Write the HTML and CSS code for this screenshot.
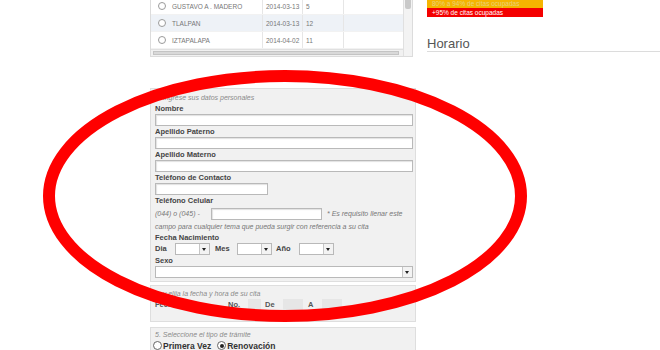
FILE: index.html
```html
<!DOCTYPE html>
<html lang="es">
<head>
<meta charset="utf-8">
<title>Citas</title>
<link rel="stylesheet" href="styles.css">
</head>
<body>
<div class="page">
  <div class="left">
    <div class="table-box">
      <div class="grid">
        <div class="rows">
          <div class="row">
            <div class="c c1"><span class="radio"></span>GUSTAVO A . MADERO</div>
            <div class="c c2">2014-03-13</div>
            <div class="c c3">5</div>
            <div class="c c4"></div>
          </div>
          <div class="row alt">
            <div class="c c1"><span class="radio"></span>TLALPAN</div>
            <div class="c c2">2014-03-13</div>
            <div class="c c3">12</div>
            <div class="c c4"></div>
          </div>
          <div class="row">
            <div class="c c1"><span class="radio"></span>IZTAPALAPA</div>
            <div class="c c2">2014-04-02</div>
            <div class="c c3">11</div>
            <div class="c c4"></div>
          </div>
        </div>
        <div class="hscroll"><div class="hthumb"></div></div>
      </div>
      <div class="vscroll"><div class="vthumb"></div></div>
    </div>

    <div class="panel p1">
      <div class="legend-line">1. Ingrese sus datos personales</div>
      <div class="lbl">Nombre</div>
      <div class="inp full"></div>
      <div class="lbl">Apellido Paterno</div>
      <div class="inp full"></div>
      <div class="lbl">Apellido Materno</div>
      <div class="inp full"></div>
      <div class="lbl">Teléfono de Contacto</div>
      <div class="inp tel"></div>
      <div class="lbl">Teléfono Celular</div>
      <div class="cel-row">
        <span class="hint pre">(044) o (045) -</span>
        <div class="inp cel"></div>
        <span class="hint note">* Es requisito llenar este</span>
      </div>
      <div class="hint line">campo para cualquier tema que pueda surgir con referencia a su cita</div>
      <div class="lbl">Fecha Nacimiento</div>
      <div class="date-row">
        <span class="lbl dl dia">Dia</span>
        <div class="sel small"><span class="arr"></span></div>
        <span class="lbl dl mes">Mes</span>
        <div class="sel small"><span class="arr"></span></div>
        <span class="lbl dl ano">Año</span>
        <div class="sel small"><span class="arr"></span></div>
      </div>
      <div class="lbl">Sexo</div>
      <div class="sel full"><span class="arr"></span></div>
    </div>

    <div class="panel p2">
      <div class="legend-line">4. y elija la fecha y hora de su cita</div>
      <div class="slot-row">
        <span class="lbl sl fecha">Fecha</span>
        <span class="lbl sl no">No.</span>
        <span class="gbox b1"></span>
        <span class="lbl sl de">De</span>
        <span class="gbox b2"></span>
        <span class="lbl sl a">A</span>
        <span class="gbox b3"></span>
      </div>
    </div>

    <div class="panel p3">
      <div class="legend-line">5. Seleccione el tipo de trámite</div>
      <div class="type-row">
        <span class="radio big"></span><span class="opt">Primera Vez</span>
        <span class="radio big on"></span><span class="opt">Renovación</span>
      </div>
    </div>
  </div>

  <div class="right">
    <div class="legend">
      <div class="lg orange">80% a 94% de citas ocupadas</div>
      <div class="lg red">+95% de citas ocupadas</div>
    </div>
    <h2 class="heading">Horario</h2>
  </div>
</div>

<svg class="annot" width="660" height="350" viewBox="0 0 660 350">
  <ellipse cx="285" cy="196" rx="236" ry="120" fill="none" stroke="#f00" stroke-width="12"/>
</svg>
</body>
</html>
```

FILE: styles.css
```css
* { box-sizing: border-box; }
html, body { margin: 0; padding: 0; }
body {
  width: 660px;
  height: 350px;
  overflow: hidden;
  background: #fff;
  font-family: "Liberation Sans", Arial, sans-serif;
  color: #333;
  position: relative;
}
.page {
  display: flex;
  padding-left: 150px;
}
.left { width: 266px; flex: none; }
.right { flex: 1; margin-left: 11px; }

/* table */
.table-box {
  width: 263px;
  height: 57px;
  display: flex;
  border: 1px solid #dcdcdc;
  border-top: none;
  overflow: hidden;
  background: #fff;
}
.grid { flex: 1; display: flex; flex-direction: column; overflow: hidden; }
.rows { flex: 1; margin-top: -2px; }
.row { display: flex; height: 17px; align-items: center; border-bottom: 1px solid #f2f2f2; }
.row.alt { background: #eef2f7; }
.c {
  height: 100%;
  display: flex;
  align-items: center;
  font-size: 6.5px;
  color: #777;
  border-right: 1px solid #e6e6e6;
  padding-left: 3px;
}
.c1 { width: 112px; padding-left: 7px; }
.c2 { width: 40px; }
.c3 { width: 41px; }
.c4 { flex: 1; border-right: none; }
.radio {
  width: 8px; height: 8px;
  border: 1px solid #9a9a9a;
  border-radius: 50%;
  background: #fff;
  margin-right: 6px;
  flex: none;
  display: inline-block;
}
.hscroll {
  height: 8px;
  background: #f1f1f1;
  border-top: 1px solid #e0e0e0;
  padding: 1px 2px 1px 2px;
}
.hthumb {
  height: 100%;
  width: 246px;
  background: #d9d9d9;
  border: 1px solid #c4c4c4;
}
.vscroll {
  width: 9px;
  background: #f3f3f3;
  border-left: 1px solid #e0e0e0;
  padding: 0 1px;
}
.vthumb { height: 9px; background: #c9c9c9; border-radius: 0 0 2px 2px; }

/* panels */
.panel {
  background: #f1f1f1;
  border: 1px solid #dedede;
  padding: 3px 2px 3px 4px;
}
.p1 { margin-top: 31px; }
.p2 { margin-top: 3px; padding-bottom: 10px; }
.p3 { margin-top: 5px; padding-top: 2px; }
.legend-line {
  font-size: 7px;
  font-style: italic;
  color: #8a8a8a;
  height: 11px;
  line-height: 11px;
}
.p2 .legend-line, .p3 .legend-line { height: 10px; line-height: 10px; }
.lbl {
  font-size: 7.5px;
  font-weight: bold;
  color: #444;
  height: 11px;
  line-height: 12px;
}
.inp {
  height: 12px;
  background: #fff;
  border: 1px solid #b9b9b9;
  box-shadow: inset 1px 1px 1px #e2e2e2;
}
.inp.full { width: 258px; }
.inp.tel { width: 113px; }
.cel-row { display: flex; align-items: center; height: 15px; }
.hint { font-size: 7px; font-style: italic; color: #777; }
.pre { width: 56px; }
.inp.cel { width: 111px; }
.note { margin-left: 5px; }
.hint.line { height: 11px; line-height: 11px; }
.date-row { display: flex; align-items: center; height: 12px; }
.dl { height: 12px; line-height: 12px; }
.dia { width: 20px; }
.mes { width: 22px; margin-left: 5px; }
.ano { width: 23px; margin-left: 4px; }
.sel {
  height: 12px;
  background: #fff;
  border: 1px solid #b9b9b9;
  display: flex;
  justify-content: flex-end;
}
.sel.small { width: 35px; }
.sel.full { width: 258px; }
.arr {
  width: 10px;
  height: 100%;
  border-left: 1px solid #c6c6c6;
  background: #f3f3f3;
  position: relative;
}
.arr::after {
  content: "";
  position: absolute;
  left: 2px; top: 4px;
  border-left: 2.5px solid transparent;
  border-right: 2.5px solid transparent;
  border-top: 3px solid #222;
}
.slot-row { display: flex; align-items: center; height: 12px; }
.sl { height: 12px; line-height: 12px; color: #555; }
.fecha { width: 73px; }
.no { width: 20px; }
.gbox { height: 12px; background: #e6e6e6; display: block; }
.b1 { width: 13px; }
.de { width: 18px; margin-left: 4px; }
.b2 { width: 20px; }
.a { width: 14px; margin-left: 5px; }
.b3 { width: 20px; }
.type-row { display: flex; align-items: center; height: 11px; margin-left: -2px; }
.radio.big { width: 9px; height: 9px; border-color: #666; margin-right: 1px; position: relative; }
.radio.big.on { margin-left: 6px; }
.radio.big.on::after {
  content: "";
  position: absolute;
  left: 1.5px; top: 1.5px;
  width: 4px; height: 4px;
  border-radius: 50%;
  background: #222;
}
.opt { font-size: 8.5px; font-weight: bold; color: #333; line-height: 10px; }

/* right */
.legend { width: 116px; margin-top: -1px; }
.lg {
  font-size: 6.5px;
  padding-left: 5px;
  height: 9px;
  line-height: 9px;
}
.orange { background: #f5b400; color: #e9d27a; }
.red { background: #f40000; color: #fff; }
.heading {
  margin: 19px 0 0 0;
  font-size: 13px;
  font-weight: normal;
  color: #555;
  height: 16px;
  line-height: 15px;
  border-bottom: 1px solid #dcdcdc;
}

.annot {
  position: absolute;
  left: 0; top: 0;
  pointer-events: none;
}
```
